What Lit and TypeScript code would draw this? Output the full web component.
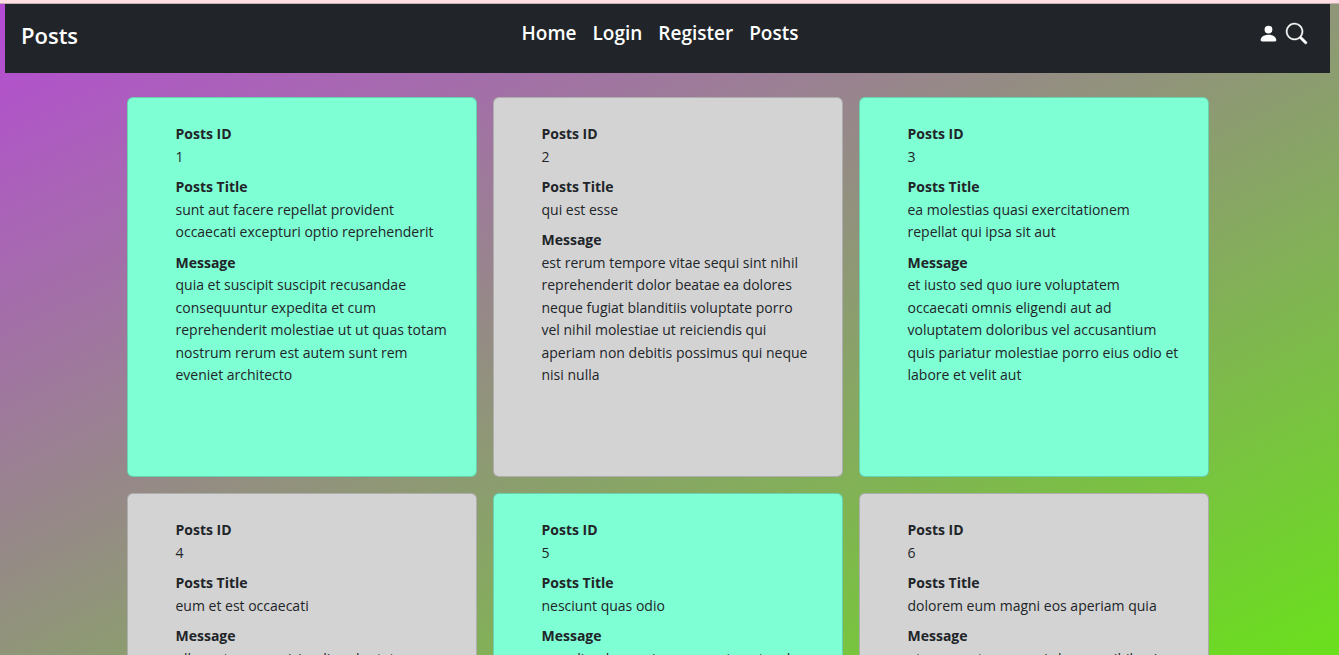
import { LitElement, html, css } from "lit";
import { customElement, property } from "lit/decorators.js";
import { classMap } from "lit/directives/class-map.js";

interface Post {
  id: number;
  title: string;
  body: string;
}

const posts: Post[] = [
  {
    id: 1,
    title: "sunt aut facere repellat provident occaecati excepturi optio reprehenderit",
    body: "quia et suscipit suscipit recusandae consequuntur expedita et cum reprehenderit molestiae ut ut quas totam nostrum rerum est autem sunt rem eveniet architecto",
  },
  {
    id: 2,
    title: "qui est esse",
    body: "est rerum tempore vitae sequi sint nihil reprehenderit dolor beatae ea dolores neque fugiat blanditiis voluptate porro vel nihil molestiae ut reiciendis qui aperiam non debitis possimus qui neque nisi nulla",
  },
  {
    id: 3,
    title: "ea molestias quasi exercitationem repellat qui ipsa sit aut",
    body: "et iusto sed quo iure voluptatem occaecati omnis eligendi aut ad voluptatem doloribus vel accusantium quis pariatur molestiae porro eius odio et labore et velit aut",
  },
  {
    id: 4,
    title: "eum et est occaecati",
    body: "ullam et saepe reiciendis voluptatem adipisci sit amet autem assumenda provident rerum culpa quis hic commodi nesciunt rem tenetur doloremque ipsam iure quis sunt voluptatem rerum illo velit",
  },
  {
    id: 5,
    title: "nesciunt quas odio",
    body: "repudiandae veniam quaerat sunt sed alias aut fugiat sit autem sed est voluptatem omnis possimus esse voluptatibus quis est aut tenetur dolor neque",
  },
  {
    id: 6,
    title: "dolorem eum magni eos aperiam quia",
    body: "ut aspernatur corporis harum nihil quis provident sequi mollitia nobis aliquid molestiae perspiciatis et ea nemo ab reprehenderit accusantium quas voluptate dolores velit et doloremque molestiae",
  },
];

@customElement("post-card")
class PostCard extends LitElement {
  @property({ attribute: false }) post!: Post;

  static styles = css`
    :host {
      display: block;
    }
    .card {
      box-sizing: border-box;
      height: 100%;
      min-height: 380px;
      padding: 25px 28px 24px 48px;
      border: 1px solid rgba(0, 0, 0, 0.176);
      border-radius: 6px;
      background: lightgray;
      color: #212529;
      font-size: 15px;
      line-height: 1.5em;
    }
    .mint {
      background: aquamarine;
    }
    .fields {
      margin: 0;
    }
    .label {
      font-size: 14px;
      font-weight: 700;
    }
    .value {
      margin: 0 0 8px;
      font-size: 14px;
      font-weight: 400;
    }
  `;

  render() {
    return html`
      <article class=${classMap({ card: true, mint: this.post.id % 2 === 1 })}>
        <dl class="fields">
          <dt class="label">Posts ID</dt>
          <dd class="value">${this.post.id}</dd>
          <dt class="label">Posts Title</dt>
          <dd class="value">${this.post.title}</dd>
          <dt class="label">Message</dt>
          <dd class="value">${this.post.body}</dd>
        </dl>
      </article>
    `;
  }
}

@customElement("app-root")
class AppRoot extends LitElement {
  static styles = css`
    :host {
      display: flex;
      flex-direction: column;
      height: 100vh;
      font-family: "Segoe UI", "Open Sans", "Noto Sans", sans-serif;
      background: linear-gradient(to bottom right, #b64ad6, #6ae01c);
    }
    .strip {
      flex: none;
      height: 3px;
      background: #ffdfe4;
      border-bottom: 1px solid #c8b0b8;
    }
    .page {
      flex: 1;
      min-height: 0;
      overflow-y: auto;
      scrollbar-width: none;
      padding: 0 9px 0 5px;
    }
    .bar {
      box-sizing: border-box;
      min-height: 69px;
      padding: 14px 23px 0 16px;
      display: grid;
      grid-template-columns: 1fr auto 1fr;
      align-items: start;
      background: #212529;
      color: #fff;
    }
    a {
      color: inherit;
      text-decoration: none;
    }
    .brand {
      font-size: 22px;
      line-height: 34px;
      font-weight: 600;
    }
    .links {
      display: flex;
      gap: 16px;
      padding-right: 8px;
      font-size: 19px;
      line-height: 30px;
      font-weight: 600;
    }
    .tools {
      display: flex;
      justify-content: flex-end;
      gap: 7px;
      padding-top: 5px;
    }
    .tool {
      display: block;
      padding: 0;
      border: 0;
      background: none;
      color: inherit;
      cursor: pointer;
    }
    .icon {
      display: block;
      width: 21px;
      height: 21px;
      fill: currentColor;
      overflow: visible;
    }
    .bold {
      stroke: currentColor;
      stroke-width: 0.3;
    }
    .grid {
      max-width: 1082px;
      margin: 24px auto;
      display: grid;
      grid-template-columns: repeat(auto-fit, minmax(300px, 1fr));
      gap: 16px;
    }
  `;

  render() {
    return html`
      <div class="strip"></div>
      <div class="page">
        <header class="bar">
          <a class="brand" href="#">Posts</a>
          <nav class="links">
            <a href="#home">Home</a>
            <a href="#login">Login</a>
            <a href="#register">Register</a>
            <a href="#posts">Posts</a>
          </nav>
          <div class="tools">
            <button class="tool" type="button" aria-label="Account">
              <svg class="icon" viewBox="0 0 16 16">
                <path d="M3 14s-1 0-1-1 1-4 6-4 6 3 6 4-1 1-1 1zm5-6a3 3 0 1 0 0-6 3 3 0 0 0 0 6" />
              </svg>
            </button>
            <button class="tool" type="button" aria-label="Search">
              <svg class="icon bold" viewBox="0 0 16 16">
                <path d="M11.742 10.344a6.5 6.5 0 1 0-1.397 1.398h-.001q.044.06.098.115l3.85 3.85a1 1 0 0 0 1.415-1.414l-3.85-3.85a1 1 0 0 0-.115-.1zM12 6.5a5.5 5.5 0 1 1-11 0 5.5 5.5 0 0 1 11 0" />
              </svg>
            </button>
          </div>
        </header>
        <main class="grid">
          ${posts.map((post) => html`<post-card .post=${post}></post-card>`)}
        </main>
      </div>
    `;
  }
}
